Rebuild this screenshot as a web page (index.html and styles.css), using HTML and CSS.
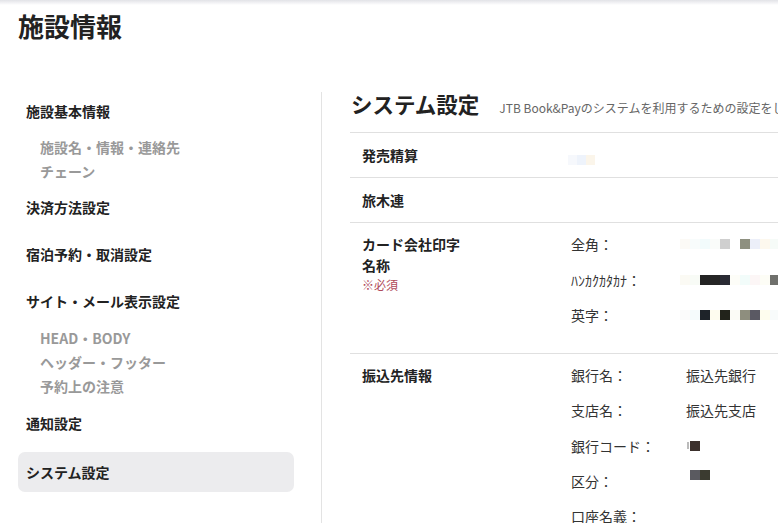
FILE: index.html
```html
<!DOCTYPE html>
<html lang="ja">
<head>
<meta charset="utf-8">
<title>施設情報</title>
<link rel="stylesheet" href="styles.css">
</head>
<body>
<div class="topbar"></div>
<h1 class="page-title">施設情報</h1>
<div class="layout">
  <aside class="sidebar">
    <nav class="nav">
      <div class="nav-group">
        <a class="nav-main">施設基本情報</a>
        <div class="nav-sub">
          <a>施設名・情報・連絡先</a>
          <a>チェーン</a>
        </div>
      </div>
      <a class="nav-main">決済方法設定</a>
      <a class="nav-main">宿泊予約・取消設定</a>
      <div class="nav-group">
        <a class="nav-main">サイト・メール表示設定</a>
        <div class="nav-sub">
          <a>HEAD・BODY</a>
          <a>ヘッダー・フッター</a>
          <a>予約上の注意</a>
        </div>
      </div>
      <a class="nav-main">通知設定</a>
      <a class="nav-main active">システム設定</a>
    </nav>
  </aside>
  <main class="content">
    <div class="content-head">
      <h2 class="content-title">システム設定</h2>
      <p class="content-desc">JTB Book&amp;Payのシステムを利用するための設定をします。</p>
    </div>
    <div class="row">
      <div class="row-label">発売精算</div>
      <div class="row-body">
        <div class="pix pix-first">
          <i style="background:#f6f8fc"></i><i style="background:#eef3fb"></i><i style="background:#fbf5ea"></i>
        </div>
      </div>
    </div>
    <div class="row">
      <div class="row-label">旅木連</div>
      <div class="row-body"></div>
    </div>
    <div class="row row-card">
      <div class="row-label">
        <span class="wrap-label">カード会社印字名称</span>
        <span class="required">※必須</span>
      </div>
      <div class="row-body fields">
        <div class="field">
          <span class="field-label">全角：</span>
          <span class="pix">
            <i style="background:#fcfaf6"></i><i style="background:#f8fcfc"></i><i style="background:#f2fbfc"></i><i style="background:#fafcfa"></i><i style="background:#cfcfcf"></i><i style="background:#fff"></i><i style="background:#8e9080"></i><i style="background:#eceff9"></i><i style="background:#fdf8ee"></i><i style="background:#f6fbf8"></i>
          </span>
        </div>
        <div class="field">
          <span class="field-label">ﾊﾝｶｸｶﾀｶﾅ：</span>
          <span class="pix">
            <i style="background:#fbfaf4"></i><i style="background:#f8fbf6"></i><i style="background:#232323"></i><i style="background:#252525"></i><i style="background:#2a2b34"></i><i style="background:#fdfdf8"></i><i style="background:#f2fcfa"></i><i style="background:#fcf6f6"></i><i style="background:#fdfdf6"></i><i style="background:#6f706c"></i>
          </span>
        </div>
        <div class="field">
          <span class="field-label">英字：</span>
          <span class="pix">
            <i style="background:#fbfbfb"></i><i style="background:#f5fbfc"></i><i style="background:#1e2329"></i><i style="background:#fefcef"></i><i style="background:#22231b"></i><i style="background:#fbfbf6"></i><i style="background:#8e8e7e"></i><i style="background:#5a5963"></i><i style="background:#fefdee"></i><i style="background:#f8fbfb"></i>
          </span>
        </div>
      </div>
    </div>
    <div class="row row-bank">
      <div class="row-label">振込先情報</div>
      <div class="row-body fields">
        <div class="field"><span class="field-label">銀行名：</span><span class="field-value">振込先銀行</span></div>
        <div class="field"><span class="field-label">支店名：</span><span class="field-value">振込先支店</span></div>
        <div class="field"><span class="field-label">銀行コード：</span><span class="pix pix-code"><i class="tick"></i><i style="background:#3b302c"></i></span></div>
        <div class="field"><span class="field-label">区分：</span><span class="pix pix-kubun"><i style="background:#5a5a60"></i><i style="background:#3b3b30"></i></span></div>
        <div class="field"><span class="field-label">口座名義：</span><span class="field-value"></span></div>
      </div>
    </div>
  </main>
</div>
</body>
</html>
```

FILE: styles.css
```css
* { box-sizing: border-box; }
html, body {
  margin: 0;
  padding: 0;
  background: #fff;
  overflow: hidden;
  height: 523px;
}
body {
  font-family: "Noto Sans CJK JP", "Noto Sans", "Liberation Sans", sans-serif;
  color: #222;
  font-size: 14px;
}
.topbar {
  height: 5px;
  background: linear-gradient(#e2e3e7, #f6f6f8 70%, #fff);
}
.page-title {
  margin: 3px 0 0 18px;
  height: 84px;
  font-size: 26px;
  line-height: 36px;
  font-weight: 700;
  color: #222;
}
.layout {
  display: flex;
  align-items: stretch;
  height: 431px;
}
.sidebar {
  width: 322px;
  flex: none;
  border-right: 1px solid #e3e3e3;
  padding-left: 18px;
}
.nav {
  width: 276px;
  display: flex;
  flex-direction: column;
  gap: 7px;
  margin-top: -1px;
}
.nav a { display: block; text-decoration: none; }
.nav-main {
  height: 40px;
  line-height: 40px;
  padding: 0 8px;
  font-weight: 700;
  color: #222;
  border-radius: 7px;
}
.nav-main.active { background: #ececee; margin-top: 2px; }
.nav-group { display: flex; flex-direction: column; }
.nav-sub {
  margin-top: 4px;
  margin-bottom: -3px;
  padding-left: 22px;
}
.nav-group + .nav-main + .nav-main + .nav-group .nav-sub { margin-top: 5px; margin-bottom: -2px; }
.nav-sub a {
  height: 24px;
  line-height: 24px;
  font-weight: 700;
  color: #999;
}
.content {
  flex: 1;
  min-width: 0;
  padding-left: 28px;
  margin-right: -200px;
}
.content-head {
  display: flex;
  align-items: baseline;
  gap: 20px;
  height: 40px;
  padding-left: 1px;
}
.content-title {
  margin: 0;
  font-size: 21.5px;
  line-height: 24px;
  font-weight: 700;
  white-space: nowrap;
}
.content-desc {
  margin: 0;
  font-size: 12px;
  color: #666;
  white-space: nowrap;
}
.row {
  display: flex;
  border-top: 1px solid #e0e0e0;
  padding: 12px 12px;
  line-height: 20px;
}
.row-label {
  width: 209px;
  flex: none;
  font-weight: 700;
  color: #222;
  display: flex;
  flex-direction: column;
  align-items: flex-start;
}
.row-body { flex: 1; }
.pix { display: inline-flex; vertical-align: middle; }
.pix i { display: block; width: 10px; height: 10px; }
.pix-first { margin: 5px 0 0 -3px; }
.pix-first i { width: 9px; }
.row-card { padding-top: 11px; padding-bottom: 28px; }
.wrap-label { width: 100px; line-height: 21px; }
.required {
  font-weight: 400;
  font-size: 12px;
  line-height: 18px;
  color: #b04a5a;
}
.fields {
  display: flex;
  flex-direction: column;
  gap: 15.5px;
}
.field { display: flex; align-items: center; height: 20px; }
.field-label {
  width: 115px;
  flex: none;
  color: #333;
}
.field .pix { margin-left: -6px; }
.row-bank { padding-top: 11px; padding-bottom: 20px; }
.row-bank .fields { gap: 15.3px; }
.field-value { color: #333; }
.pix-code { margin-left: 1px !important; align-items: center; }
.pix-code .tick { width: 2px; height: 7px; background: #bbb; margin-right: 1px; }
.pix-kubun { margin-left: 4px !important; margin-top: -12px; }
```
